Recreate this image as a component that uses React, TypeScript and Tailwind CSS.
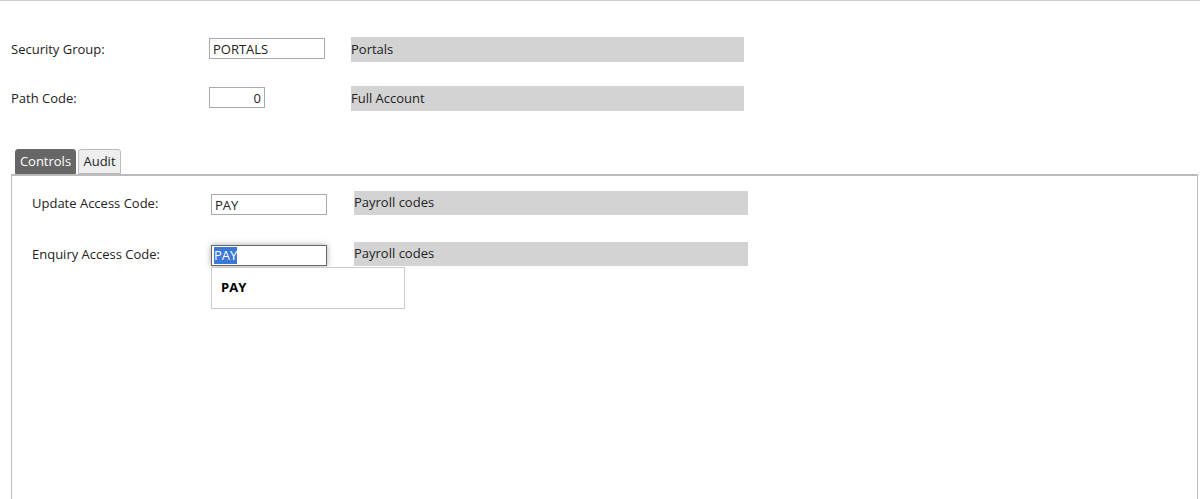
import { useState } from "react";

const font = { fontFamily: '"Open Sans", "Noto Sans", sans-serif' };

function Lookup({ children, className }: { children: string; className: string }) {
  return (
    <div className={`flex items-center bg-[#d3d3d3] text-[13px] text-[#222] ${className}`}>
      {children}
    </div>
  );
}

export default function App() {
  const [tab, setTab] = useState("Controls");

  return (
    <div style={font} className="h-[499px] overflow-hidden border-t border-[#cccccc] bg-white text-[13px] text-[#222]">
      <div className="pl-[11px] pt-[36px]">
        <div className="flex h-[25px] items-center">
          <label className="w-[198px]">Security Group:</label>
          <input
            readOnly
            value="PORTALS"
            className="mb-[2px] h-[21px] w-[116px] border border-[#aaa] px-[3px] text-[13px] outline-none"
          />
          <Lookup className="ml-[26px] h-[25px] w-[393px]">Portals</Lookup>
        </div>

        <div className="mt-[24px] flex h-[25px] items-center">
          <label className="w-[198px]">Path Code:</label>
          <input
            readOnly
            value="0"
            className="mb-[2px] h-[21px] w-[56px] border border-[#aaa] px-[3px] text-right text-[13px] outline-none"
          />
          <Lookup className="ml-[86px] h-[25px] w-[393px]">Full Account</Lookup>
        </div>
      </div>

      <div className="mt-[38px] flex gap-[2px] pl-[15px]">
        {["Controls", "Audit"].map((name) => (
          <button
            key={name}
            onClick={() => setTab(name)}
            className={
              tab === name
                ? "h-[25px] w-[61px] rounded-t-[3px] border border-[#666] bg-[#666] text-[13px] text-white"
                : "h-[25px] w-[43px] rounded-t-[3px] border border-[#bbb] bg-[#eee] text-[13px] text-[#222]"
            }
          >
            {name}
          </button>
        ))}
      </div>

      <div className="ml-[11px] h-[330px] w-[1187px] border-x border-t-2 border-[#bbb] pl-[20px] pt-[15px]">
        <div className="flex h-[24px] items-center">
          <label className="mt-[2px] w-[179px]">Update Access Code:</label>
          <input
            readOnly
            value="PAY"
            className="mt-[3px] h-[21px] w-[116px] border border-[#aaa] px-[3px] text-[13px] outline-none"
          />
          <Lookup className="ml-[27px] h-[24px] w-[394px]">Payroll codes</Lookup>
        </div>

        <div className="mt-[27px] flex h-[24px] items-center">
          <label className="mt-[2px] w-[179px]">Enquiry Access Code:</label>
          <div className="relative mt-[3px]">
            <div className="flex h-[21px] w-[116px] items-center border border-[#666] px-[2px] shadow-[0_0_6px_rgba(0,0,0,0.35)]">
              <span className="bg-[#3c78d8] leading-[17px] text-white">PAY</span>
            </div>
            <div className="absolute left-0 top-[22px] z-10 flex h-[42px] w-[194px] items-center border border-[#ccc] bg-white pl-[9px] font-bold text-[13px] text-black">
              PAY
            </div>
          </div>
          <Lookup className="ml-[27px] h-[24px] w-[394px]">Payroll codes</Lookup>
        </div>
      </div>
    </div>
  );
}
